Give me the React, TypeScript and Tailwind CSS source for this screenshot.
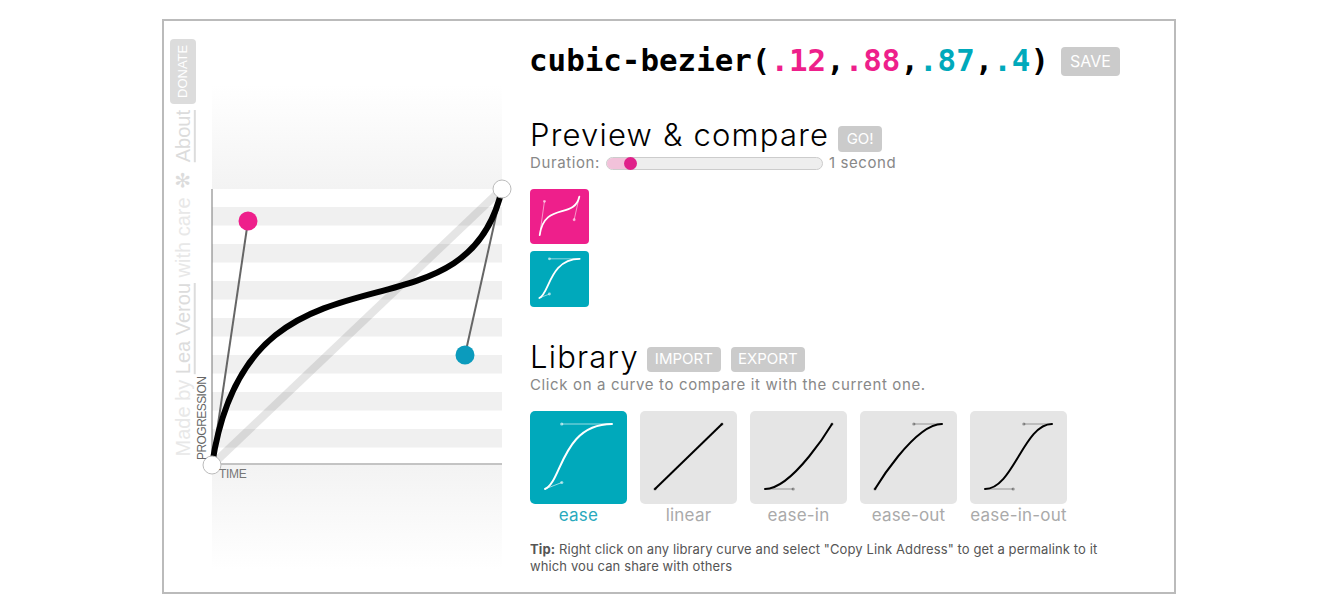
const PINK = "#ee1f8b";
const TEAL = "#00a9bb";

const bands = [207, 244, 281, 318, 355, 392, 429];
const library = [
  { name: "ease", p: [0.25, 0.1, 0.25, 1], active: true },
  { name: "linear", p: [0, 0, 1, 1], active: false },
  { name: "ease-in", p: [0.42, 0, 1, 1], active: false },
  { name: "ease-out", p: [0, 0, 0.58, 1], active: false },
  { name: "ease-in-out", p: [0.42, 0, 0.58, 1], active: false },
];

function MiniCurve({ p, light, weight = 2 }: { p: number[]; light: boolean; weight?: number }) {
  const x = (v: number) => 15 + v * 67;
  const y = (v: number) => 78 - v * 65;
  const stroke = light ? "#fff" : "#000";
  const handle = light ? "rgba(255,255,255,.6)" : "rgba(0,0,0,.35)";
  return (
    <svg viewBox="0 0 97 93" className="h-full w-full">
      <line x1={x(0)} y1={y(0)} x2={x(p[0])} y2={y(p[1])} stroke={handle} strokeWidth={weight / 2} />
      <line x1={x(1)} y1={y(1)} x2={x(p[2])} y2={y(p[3])} stroke={handle} strokeWidth={weight / 2} />
      <circle cx={x(p[0])} cy={y(p[1])} r={weight * 0.8} fill={handle} />
      <circle cx={x(p[2])} cy={y(p[3])} r={weight * 0.8} fill={handle} />
      <path
        d={`M${x(0)} ${y(0)}C${x(p[0])} ${y(p[1])} ${x(p[2])} ${y(p[3])} ${x(1)} ${y(1)}`}
        fill="none"
        stroke={stroke}
        strokeWidth={weight}
        strokeLinecap="round"
      />
    </svg>
  );
}

function Button({ label, className }: { label: string; className: string }) {
  return (
    <span className={`flex items-center justify-center rounded-[4px] bg-[#cbcbcb] text-white ${className}`}>{label}</span>
  );
}

function Chart() {
  return (
    <svg viewBox="212 85 290 486" className="h-[486px] w-[290px] overflow-visible">
      <defs>
        <linearGradient id="fadeUp" x1="0" y1="0" x2="0" y2="1">
          <stop offset="0" stopColor="#fff" />
          <stop offset="1" stopColor="#f3f3f3" />
        </linearGradient>
        <linearGradient id="fadeDown" x1="0" y1="0" x2="0" y2="1">
          <stop offset="0" stopColor="#f3f3f3" />
          <stop offset="1" stopColor="#fff" />
        </linearGradient>
      </defs>
      <rect x="212" y="85" width="290" height="104" fill="url(#fadeUp)" />
      <rect x="212" y="465" width="290" height="105" fill="url(#fadeDown)" />
      {bands.map((b) => (
        <rect key={b} x="212" y={b} width="290" height="18.5" fill="#f0f0f0" />
      ))}
      <line x1="212" y1="189" x2="212" y2="465" stroke="#777" strokeWidth="1" />
      <line x1="212" y1="464" x2="502" y2="464" stroke="#888" strokeWidth="1" />
      <line x1="212" y1="465" x2="502" y2="189" stroke="#000" strokeOpacity=".1" strokeWidth="8" />
      <line x1="212" y1="465" x2="248" y2="221" stroke="#666" strokeWidth="2" />
      <line x1="502" y1="189" x2="465" y2="355" stroke="#666" strokeWidth="2" />
      <path d="M212 465C248 221 465 355 502 189" fill="none" stroke="#000" strokeWidth="6" />
      <circle cx="248" cy="221" r="9.5" fill={PINK} />
      <circle cx="465" cy="355" r="9.5" fill="#0b9bbd" />
      <circle cx="212" cy="465" r="9" fill="#fff" stroke="#bbb" strokeWidth="1" />
      <circle cx="502" cy="189" r="9" fill="#fff" stroke="#bbb" strokeWidth="1" />
      <text x="219" y="478" fontSize="12" fill="#777" fontFamily="Liberation Sans" letterSpacing="-.3">TIME</text>
      <text transform="translate(206 460) rotate(-90)" fontSize="12" fill="#666" fontFamily="Liberation Sans" letterSpacing="-.55">PROGRESSION</text>
    </svg>
  );
}

export default function App() {
  return (
    <div className="flex h-[615px] w-[1338px] justify-center overflow-hidden bg-white pt-[19px] font-['Liberation_Sans',sans-serif]">
      <div className="flex h-[575px] w-[1014px] items-start border-2 border-[#bbb]">
        <aside className="flex w-[48px] justify-start pl-[6px] pt-[18px]">
          <div className="flex flex-col items-center gap-[6px]">
            <span className="flex h-[65px] w-[26px] rotate-180 items-center justify-center rounded-[4px] bg-[#dcdcdc] text-[13px] text-white [writing-mode:vertical-rl]">
              DONATE
            </span>
            <p className="rotate-180 whitespace-nowrap text-[20px] leading-[26px] text-[#e8e8e8] [writing-mode:vertical-rl]">
              Made by <u className="text-[#dcdcdc]">Lea Verou</u> with care <span className="text-[#dcdcdc]">✻</span> <u className="text-[#dcdcdc]">About</u>
            </p>
          </div>
        </aside>
        <div className="mt-[64px]">
          <Chart />
        </div>
        <main className="ml-[28px] h-[550px] flex-1 overflow-hidden font-['Inter','Noto_Sans',sans-serif]">
          <div className="mt-[21px] flex h-[36px] items-center">
            <h1 className="ml-[-1px] font-['DejaVu_Sans_Mono',monospace] text-[30.85px] font-bold text-black">
              cubic-bezier(<span style={{ color: PINK }}>.12</span>,<span style={{ color: PINK }}>.88</span>,<span style={{ color: TEAL }}>.87</span>,<span style={{ color: TEAL }}>.4</span>)
            </h1>
            <Button label="SAVE" className="ml-[12px] mt-[2px] h-[29px] w-[59px] text-[16px]" />
          </div>

          <div className="mt-[38px] flex h-[38px] items-center">
            <h2 className="text-[31px] font-light tracking-[1.2px] text-black">Preview &amp; compare</h2>
            <Button label="GO!" className="ml-[9px] mt-[8px] h-[26px] w-[44px] text-[15px]" />
          </div>
          <div className="mt-[-1px] flex h-[20px] items-center text-[15px] tracking-[0.6px] text-[#888]">
            <span>Duration:</span>
            <div className="relative ml-[6px] h-[13px] w-[217px] rounded-full border border-[#ccc] bg-[#eee]">
              <div className="h-full w-[26px] rounded-full bg-[#f2c2da]" />
              <div className="absolute left-[17px] top-[-1px] h-[13px] w-[13px] rounded-full bg-[#e0218a]" />
            </div>
            <span className="ml-[6px]">1 second</span>
          </div>

          <div className="mt-[16px] flex flex-col gap-[7px]">
            <div className="h-[55px] w-[59px] rounded-[4px]" style={{ background: PINK }}>
              <MiniCurve p={[0.12, 0.88, 0.87, 0.4]} light weight={3} />
            </div>
            <div className="h-[56px] w-[59px] rounded-[4px]" style={{ background: TEAL }}>
              <MiniCurve p={[0.25, 0.1, 0.25, 1]} light weight={3} />
            </div>
          </div>

          <div className="mt-[30px] flex h-[40px] items-center">
            <h2 className="text-[31px] font-light tracking-[1.2px] text-black">Library</h2>
            <Button label="IMPORT" className="ml-[8px] mt-[4px] h-[25px] w-[74px] text-[15px]" />
            <Button label="EXPORT" className="ml-[10px] mt-[4px] h-[25px] w-[74px] text-[15px]" />
          </div>
          <p className="mt-[-2px] h-[20px] text-[15px] leading-[20px] tracking-[0.63px] text-[#888]">Click on a curve to compare it with the current one.</p>

          <div className="mt-[16px] flex gap-[13px]">
            {library.map((item) => (
              <div key={item.name} className="flex w-[97px] flex-col items-center">
                <div className={`h-[93px] w-[97px] rounded-[5px] ${item.active ? "bg-[#00a9bb]" : "bg-[#e5e5e5]"}`}>
                  <MiniCurve p={item.p} light={item.active} />
                </div>
                <span className={`whitespace-nowrap text-[17px] leading-[22px] tracking-[0.2px] ${item.active ? "text-[#2aa9bd]" : "text-[#aaa]"}`}>
                  {item.name}
                </span>
              </div>
            ))}
          </div>

          <p className="mt-[15px] w-[575px] text-[13px] leading-[17px] tracking-[0.11px] text-[#555]">
            <strong>Tip:</strong> Right click on any library curve and select "Copy Link Address" to get a permalink to it which you can share with others
          </p>
        </main>
      </div>
    </div>
  );
}
